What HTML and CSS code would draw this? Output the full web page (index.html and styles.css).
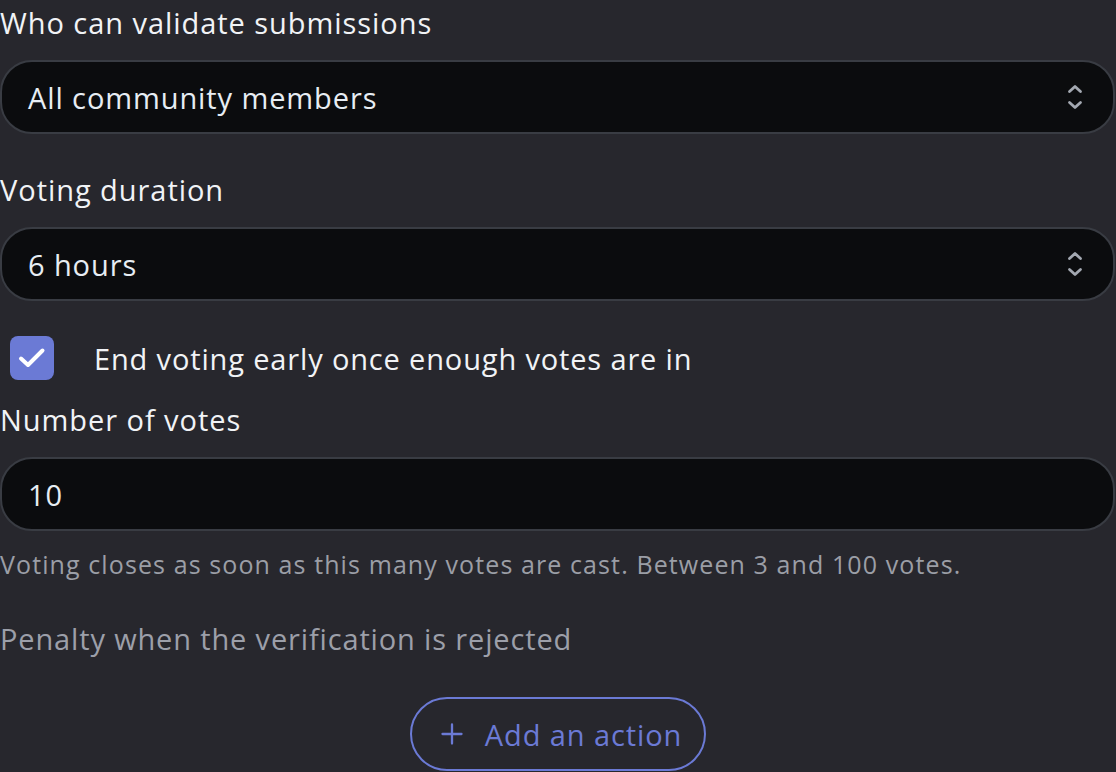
FILE: index.html
```html
<!DOCTYPE html>
<html lang="en">
<head>
<meta charset="utf-8">
<title>Validation settings</title>
<link rel="stylesheet" href="styles.css">
</head>
<body>
<main class="form">
  <section class="field">
    <label class="label">Who can validate submissions</label>
    <div class="select">
      <span class="select-value">All community members</span>
      <svg class="chevrons" width="16" height="32" viewBox="0 0 16 32" aria-hidden="true">
        <path d="M2.5 10.5 L8 5.5 L13.5 10.5" />
        <path d="M2.5 21.5 L8 26.5 L13.5 21.5" />
      </svg>
    </div>
  </section>

  <section class="field">
    <label class="label">Voting duration</label>
    <div class="select">
      <span class="select-value">6 hours</span>
      <svg class="chevrons" width="16" height="32" viewBox="0 0 16 32" aria-hidden="true">
        <path d="M2.5 10.5 L8 5.5 L13.5 10.5" />
        <path d="M2.5 21.5 L8 26.5 L13.5 21.5" />
      </svg>
    </div>
  </section>

  <div class="check-row">
    <span class="checkbox">
      <svg width="44" height="44" viewBox="0 0 44 44" aria-hidden="true">
        <path d="M11 22.5 L18 29 L32.5 14.5" />
      </svg>
    </span>
    <span class="check-label">End voting early once enough votes are in</span>
  </div>

  <section class="field field-tight">
    <label class="label">Number of votes</label>
    <div class="input">10</div>
    <p class="help">Voting closes as soon as this many votes are cast. Between 3 and 100 votes.</p>
  </section>

  <section class="penalty">
    <p class="muted-label">Penalty when the verification is rejected</p>
    <button class="add-btn" type="button">
      <svg class="plus" width="22" height="22" viewBox="0 0 22 22" aria-hidden="true">
        <path d="M11 1.5 V20.5 M1.5 11 H20.5" />
      </svg>
      <span>Add an action</span>
    </button>
  </section>
</main>
</body>
</html>
```

FILE: styles.css
```css
* { box-sizing: border-box; }

html, body {
  margin: 0;
  padding: 0;
  background: #27272d;
}

body {
  font-family: "Open Sans", "Lato", "DejaVu Sans", sans-serif;
  color: #f1f3f6;
  overflow: hidden;
}

.form {
  width: 1115px;
  display: flex;
  flex-direction: column;
}

.field {
  display: flex;
  flex-direction: column;
  gap: 14px;
  margin-bottom: 33px;
}

.label {
  display: block;
  font-size: 29px;
  letter-spacing: 0.95px;
  line-height: 46px;
  color: #f1f3f6;
}

.select, .input {
  height: 74px;
  border: 2px solid #393c43;
  border-radius: 32px;
  background: #0b0c0e;
  display: flex;
  align-items: center;
  padding: 0 25px 0 26px;
  font-size: 29px;
  letter-spacing: 0.9px;
  color: #e7edf3;
}

.select { justify-content: space-between; padding-right: 30px; }

.select-value { line-height: 1; }

.chevrons path {
  fill: none;
  stroke: #a3a8b1;
  stroke-width: 2.8;
  stroke-linecap: round;
  stroke-linejoin: round;
}

.check-row {
  display: flex;
  align-items: center;
  gap: 40px;
  padding-left: 10px;
  margin-top: 2px;
  margin-bottom: 17px;
}

.checkbox {
  width: 44px;
  height: 44px;
  border-radius: 8px;
  background: #6b7ad5;
  display: flex;
  align-items: center;
  justify-content: center;
}

.checkbox path {
  fill: none;
  stroke: #ffffff;
  stroke-width: 4;
  stroke-linecap: round;
  stroke-linejoin: round;
}

.check-label {
  font-size: 29px;
  letter-spacing: 0.85px;
  color: #f1f3f6;
}

.field-tight { gap: 14px; margin-bottom: 35px; }

.help {
  margin: 2px 0 0;
  font-size: 25px;
  letter-spacing: 1.1px;
  line-height: 34px;
  color: #9b9ea6;
}

.penalty {
  display: flex;
  flex-direction: column;
  align-items: center;
  gap: 35px;
}

.muted-label {
  align-self: flex-start;
  margin: 0;
  font-size: 29px;
  letter-spacing: 0.85px;
  line-height: 46px;
  color: #9c9fa9;
}

.add-btn {
  width: 296px;
  height: 74px;
  margin-left: 1px;
  border: 2px solid #6b7ad5;
  border-radius: 37px;
  background: transparent;
  color: #6b7ad5;
  font-family: inherit;
  font-size: 29px;
  letter-spacing: 0.9px;
  display: flex;
  align-items: center;
  justify-content: center;
  gap: 22px;
  padding: 0 0 0 7px;
}

.plus path {
  fill: none;
  stroke: #6b7ad5;
  stroke-width: 2.3;
  stroke-linecap: round;
}
```
